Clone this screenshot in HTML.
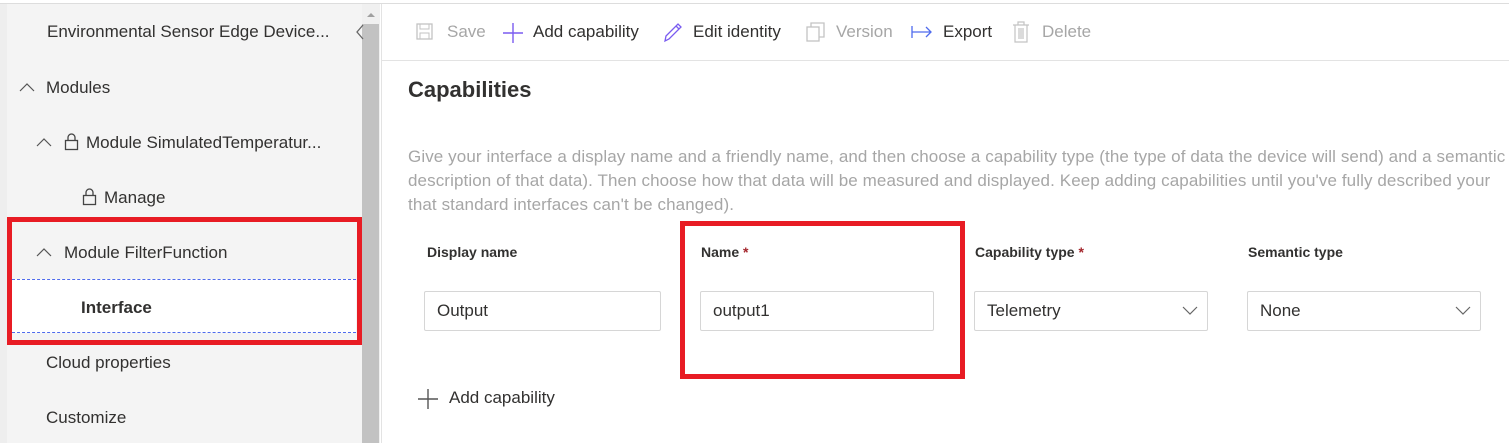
<!DOCTYPE html>
<html><head><meta charset="utf-8"><style>
*{margin:0;padding:0;box-sizing:border-box}
body{width:1509px;height:443px;overflow:hidden;background:#fff;font-family:"Segoe UI","Liberation Sans",sans-serif;color:#323130;position:relative}
.a{position:absolute;white-space:nowrap}
.side{left:7px;top:4px;width:355px;height:439px;background:#f4f4f4}
.nav{font-size:17px;color:#323130;line-height:20px}
.tb{font-size:17px;line-height:20px}
.lbl{font-size:14px;font-weight:bold;line-height:18px}
.inp{height:40px;border:1px solid #d6d6d6;border-radius:2px;font-size:17px;line-height:38px;padding-left:12px;background:#fff}
.desc{font-size:17px;letter-spacing:0.1px;color:#a6a6a6;line-height:24px;left:408px;width:1101px;overflow:hidden}
</style></head><body>
<div class="a" style="left:0;top:3px;width:1509px;height:1px;background:#ddd"></div>
<div class="a" style="left:0;top:4px;width:7px;height:439px;background:#eeeeee"></div>
<div class="a side"></div>
<div class="a" style="left:362px;top:4px;width:18px;height:439px;background:#f0f0f0"></div>
<div class="a" style="left:362px;top:24px;width:17px;height:419px;background:#c2c2c2"></div>
<svg class="a" style="left:363px;top:10px" width="16" height="10"><path d="M4 7 L8 3 L12 7Z" fill="#a0a0a0"/></svg>
<svg class="a" style="left:355px;top:24px" width="10" height="16"><path d="M8 1 L2 8 L8 15" stroke="#666" fill="none" stroke-width="1.3"/></svg>
<div class="a" style="left:381px;top:4px;width:1px;height:439px;background:#e3e3e3"></div>

<div class="a" style="left:12px;top:279px;width:344px;height:54px;background:#fff;border-top:1px dashed #4f6bed;border-bottom:1px dashed #4f6bed"></div>
<div class="a" style="left:7px;top:217px;width:355px;height:128px;border:5px solid #e81c24"></div>

<div class="a nav" style="left:47px;top:22px">Environmental Sensor Edge Device...</div>
<svg class="a" style="left:19px;top:82px" width="16" height="10"><path d="M1 9 L8 2 L15 9" stroke="#555" fill="none" stroke-width="1.2"/></svg>
<div class="a nav" style="left:46px;top:78px">Modules</div>
<svg class="a" style="left:36px;top:137px" width="16" height="10"><path d="M1 9 L8 2 L15 9" stroke="#555" fill="none" stroke-width="1.2"/></svg>
<svg class="a" style="left:64px;top:133px" width="16" height="18"><rect x="1.5" y="7.5" width="12" height="9" fill="none" stroke="#444" stroke-width="1.3"/><path d="M4 7.5 V4.5 a3.5 3.5 0 0 1 7 0 V7.5" fill="none" stroke="#444" stroke-width="1.3"/></svg>
<div class="a nav" style="left:86px;top:133px">Module SimulatedTemperatur...</div>
<svg class="a" style="left:82px;top:188px" width="16" height="18"><rect x="1.5" y="7.5" width="12" height="9" fill="none" stroke="#444" stroke-width="1.3"/><path d="M4 7.5 V4.5 a3.5 3.5 0 0 1 7 0 V7.5" fill="none" stroke="#444" stroke-width="1.3"/></svg>
<div class="a nav" style="left:104px;top:188px">Manage</div>
<svg class="a" style="left:36px;top:247px" width="16" height="10"><path d="M1 9 L8 2 L15 9" stroke="#555" fill="none" stroke-width="1.2"/></svg>
<div class="a nav" style="left:64px;top:243px">Module FilterFunction</div>
<div class="a nav" style="left:81px;top:298px;font-weight:bold">Interface</div>
<div class="a nav" style="left:46px;top:353px">Cloud properties</div>
<div class="a nav" style="left:46px;top:408px">Customize</div>

<div class="a" style="left:382px;top:60px;width:1127px;height:1px;background:#e3e3e3"></div>
<svg class="a" style="left:416px;top:23px" width="18" height="18"><rect x="1" y="1" width="15" height="15" fill="none" stroke="#c3c3c3" stroke-width="1.3"/><rect x="4" y="1" width="9" height="5" fill="none" stroke="#c3c3c3"/><rect x="4" y="10" width="9" height="6" fill="none" stroke="#c3c3c3"/></svg>
<div class="a tb" style="left:447px;top:22px;color:#a6a6a6">Save</div>
<svg class="a" style="left:502px;top:22px" width="22" height="22"><path d="M11 1 V21 M1 11 H21" stroke="#7a5cf0" stroke-width="1.4"/></svg>
<div class="a tb" style="left:533px;top:22px">Add capability</div>
<svg class="a" style="left:662px;top:21px" width="22" height="22"><path d="M3 20 L4 15 L16 3 L19 6 L7 18 Z M14 5 L17 8" stroke="#7a5cf0" fill="none" stroke-width="1.3"/></svg>
<div class="a tb" style="left:693px;top:22px">Edit identity</div>
<svg class="a" style="left:806px;top:22px" width="20" height="20"><rect x="1" y="5" width="12" height="14" fill="none" stroke="#c3c3c3" stroke-width="1.3"/><path d="M5 5 V1 H18 V15 H13" fill="none" stroke="#c3c3c3" stroke-width="1.3"/></svg>
<div class="a tb" style="left:836px;top:22px;color:#a6a6a6">Version</div>
<svg class="a" style="left:911px;top:24px" width="22" height="16"><path d="M1 2 V14 M1 8 H20 M15 3 L20 8 L15 13" stroke="#4f6bed" fill="none" stroke-width="1.3"/></svg>
<div class="a tb" style="left:943px;top:22px">Export</div>
<svg class="a" style="left:1012px;top:21px" width="18" height="22"><path d="M1 4 H17 M6 4 V1 H12 V4 M3 4 V21 H15 V4 M7 7 V18 M9 7 V18 M11 7 V18" stroke="#c3c3c3" fill="none" stroke-width="1.2"/></svg>
<div class="a tb" style="left:1042px;top:22px;color:#a6a6a6">Delete</div>

<div class="a" style="left:408px;top:76px;font-size:22px;font-weight:bold;line-height:28px">Capabilities</div>
<div class="a desc" style="top:145px">Give your interface a display name and a friendly name, and then choose a capability type (the type of data the device will send) and a semantic</div>
<div class="a desc" style="top:169px">description of that data). Then choose how that data will be measured and displayed. Keep adding capabilities until you've fully described your</div>
<div class="a desc" style="top:193px">that standard interfaces can't be changed).</div>

<div class="a lbl" style="left:427px;top:243px">Display name</div>
<div class="a lbl" style="left:701px;top:243px">Name <span style="color:#a4262c">*</span></div>
<div class="a lbl" style="left:975px;top:243px">Capability type <span style="color:#a4262c">*</span></div>
<div class="a lbl" style="left:1248px;top:243px">Semantic type</div>

<div class="a inp" style="left:424px;top:291px;width:237px">Output</div>
<div class="a inp" style="left:700px;top:291px;width:234px">output1</div>
<div class="a inp" style="left:974px;top:291px;width:234px">Telemetry</div>
<div class="a inp" style="left:1247px;top:291px;width:234px">None</div>
<svg class="a" style="left:1182px;top:305px" width="16" height="10"><path d="M1 2 L8 9 L15 2" stroke="#666" fill="none" stroke-width="1.2"/></svg>
<svg class="a" style="left:1455px;top:305px" width="16" height="10"><path d="M1 2 L8 9 L15 2" stroke="#666" fill="none" stroke-width="1.2"/></svg>

<div class="a" style="left:680px;top:221px;width:285px;height:158px;border:5px solid #e81c24"></div>

<svg class="a" style="left:417px;top:388px" width="22" height="22"><path d="M11 1 V21 M1 11 H21" stroke="#555" stroke-width="1.4"/></svg>
<div class="a tb" style="left:449px;top:388px">Add capability</div>
</body></html>
